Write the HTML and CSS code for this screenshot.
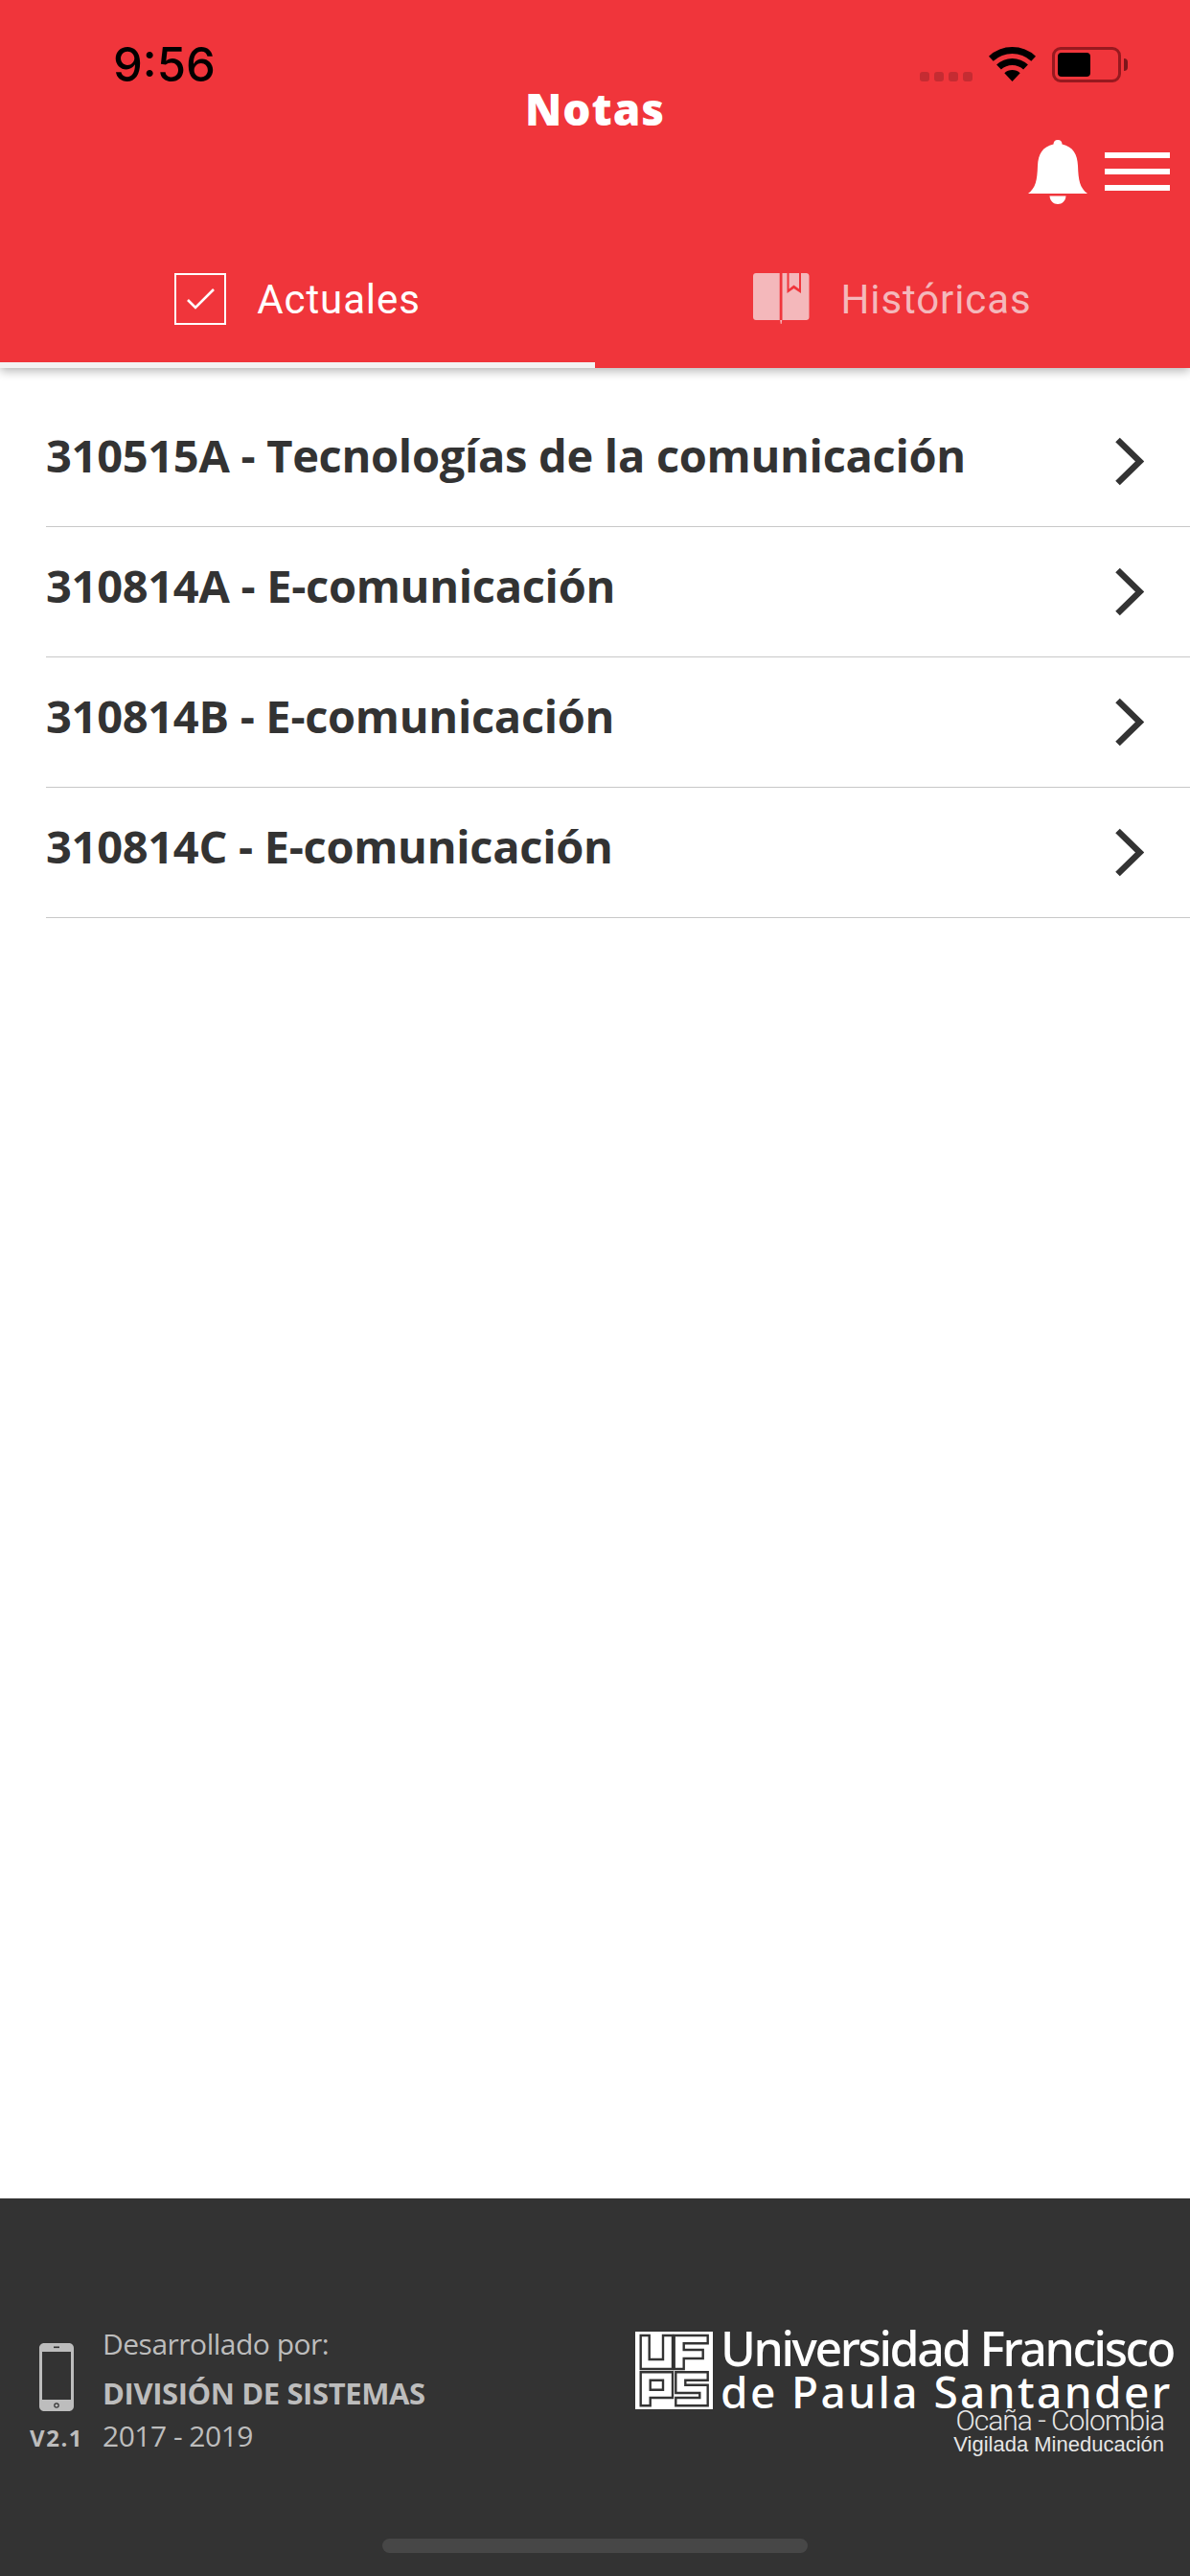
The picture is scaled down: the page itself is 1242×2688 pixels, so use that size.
FILE: index.html
```html
<!DOCTYPE html>
<html lang="es">
<head>
<meta charset="utf-8">
<title>Notas</title>
<link rel="stylesheet" href="styles.css">
</head>
<body>
<div class="app">
  <header class="header">
    <div class="status">
      <span class="time">9:56</span>
      <div class="status-icons">
        <span class="signal"><i></i><i></i><i></i><i></i></span>
        <svg class="wifi" width="49" height="36" viewBox="0 0 49 36"><path d="M0 9.700A36 36 0 0 1 49 9.700L44.300 14.800A29 29 0 0 0 4.700 14.800Z"/><path d="M8.100 18.500A24 24 0 0 1 40.900 18.500L36.100 23.600A17 17 0 0 0 12.900 23.600Z"/><path d="M16.300 27.200A12 12 0 0 1 32.700 27.200L24.500 36Z"/></svg>
        <span class="battery"><span class="battery-level"></span></span>
        <span class="battery-cap"></span>
      </div>
    </div>
    <h1 class="title">Notas</h1>
    <div class="actions">
      <svg class="bell" width="62" height="67" viewBox="0 0 62 67"><path d="M31 0C28 0 26.500 2 26.500 4.500C15 7 10.500 15 10 27C9.500 42 8 50 0 56H62C54 50 52.500 42 52 27C51.500 15 47 7 35.500 4.500C35.500 2 34 0 31 0Z" fill="#fff"/><path d="M22.500 58.500H39.500C39 64 35.500 67 31 67C26.500 67 23 64 22.500 58.500Z" fill="#fff"/></svg>
      <div class="burger"><i></i><i></i><i></i></div>
    </div>
    <nav class="tabs">
      <div class="tab tab-active">
        <span class="check"><svg width="29" height="22" viewBox="0 0 29 22"><path d="M1 12L9 20L28 1" fill="none" stroke="#fff" stroke-width="2.600"/></svg></span>
        <span class="tab-label">Actuales</span>
      </div>
      <div class="tab tab-muted">
        <svg class="book" width="59" height="53" viewBox="0 0 59 53"><path d="M3 0H27.700V49H3C1.300 49 0 47.700 0 46V3C0 1.300 1.300 0 3 0Z" fill="#f4b8bb"/><path d="M30.500 0H35.500V21L42.500 16L50 21V0H55.500C57.200 0 58.500 1.300 58.500 3V46C58.500 47.700 57.200 49 55.500 49H30.500Z" fill="#f4b8bb"/><path d="M37.500 0H48V16.500L42.500 12.500L37.500 16.500Z" fill="#f4b8bb"/><path d="M28.200 49H30.200L29.600 53H28.800Z" fill="#f4b8bb"/></svg>
        <span class="tab-label">Históricas</span>
      </div>
    </nav>
  </header>
  <main class="list">
    <div class="row"><span class="row-text">310515A - Tecnologías de la comunicación</span><svg class="chev" width="32" height="53" viewBox="0 0 32 53"><path d="M4.500 4L27.500 26.500L4.500 49" fill="none" stroke="#333" stroke-width="6.500"/></svg></div>
    <div class="row"><span class="row-text">310814A - E-comunicación</span><svg class="chev" width="32" height="53" viewBox="0 0 32 53"><path d="M4.500 4L27.500 26.500L4.500 49" fill="none" stroke="#333" stroke-width="6.500"/></svg></div>
    <div class="row"><span class="row-text">310814B - E-comunicación</span><svg class="chev" width="32" height="53" viewBox="0 0 32 53"><path d="M4.500 4L27.500 26.500L4.500 49" fill="none" stroke="#333" stroke-width="6.500"/></svg></div>
    <div class="row"><span class="row-text">310814C - E-comunicación</span><svg class="chev" width="32" height="53" viewBox="0 0 32 53"><path d="M4.500 4L27.500 26.500L4.500 49" fill="none" stroke="#333" stroke-width="6.500"/></svg></div>
  </main>
  <footer class="footer">
    <div class="footer-main">
      <div class="dev">
        <div class="version">
          <svg width="36" height="71" viewBox="0 0 36 71"><path fill-rule="evenodd" d="M5 0H31C33.800 0 36 2.200 36 5V66C36 68.800 33.800 71 31 71H5C2.200 71 0 68.800 0 66V5C0 2.200 2.200 0 5 0ZM3 9V59H33V9Z" fill="#bdbdbd"/><rect x="15" y="3.500" width="6" height="1.600" fill="#333"/><circle cx="18" cy="65" r="2.200" fill="none" stroke="#333" stroke-width="1.200"/></svg>
          <span class="version-label">V2.1</span>
        </div>
        <div class="dev-text">
          <span class="dev-line">Desarrollado por:</span>
          <span class="dev-strong">DIVISIÓN DE SISTEMAS</span>
          <span class="dev-line">2017 - 2019</span>
        </div>
      </div>
      <div class="brand">
        <div class="brand-top">
          <svg class="ufps" width="81" height="81" viewBox="0 0 81 81"><rect width="81" height="81" fill="#fff"/><g fill="none" stroke="#333" stroke-width="2.400"><path d="M5.700 4H14.700V29H29V4H39V39H5.700Z"/><path d="M40.700 4H75.700V12.300H50.700V19H70.700V28H50.700V39H40.700Z"/><path d="M5.700 42.300H39V69H15.700V77.300H5.700ZM15.700 50.700V60.700H29V50.700Z"/><path d="M42.300 42.300H75.700V50.700H52.300V55.700H75.700V77.300H42.300V69H67.300V64H42.300Z"/></g></svg>
          <div class="brand-name">
            <span class="brand-l1">Universidad Francisco</span>
            <span class="brand-l2">de Paula Santander</span>
          </div>
        </div>
        <div class="brand-sub">
          <span class="brand-city">Ocaña - Colombia</span>
          <span class="brand-vig">Vigilada Mineducación</span>
        </div>
      </div>
    </div>
    <div class="home-indicator"></div>
  </footer>
</div>
</body>
</html>
```

FILE: styles.css
```css
* { box-sizing: border-box; }
html, body { margin: 0; padding: 0; }
body { background: #fff; font-family: "Open Sans", "Liberation Sans", sans-serif; }
i { display: block; }

.app { width: 1242px; height: 2688px; display: flex; flex-direction: column; overflow: hidden; }

.header { height: 384px; background: #f0353b; position: relative; z-index: 1; box-shadow: 0 3px 10px rgba(0,0,0,.3); display: flex; flex-direction: column; flex: none; }

.status { height: 90px; display: flex; justify-content: space-between; padding: 45px 65px 0 118px; flex: none; }
.time { font: 500 49px/46px "Inter", "Liberation Sans", sans-serif; color: #000; height: 46px; }
.status-icons { display: flex; align-items: flex-start; margin-top: 4px; }
.signal { display: flex; gap: 5px; margin-top: 26px; margin-right: 17px; }
.signal i { width: 10px; height: 10px; border-radius: 3px; background: #c52c32; }
.wifi { margin-right: 17px; flex: none; }
.battery { width: 72px; height: 37px; border: 3px solid #97191f; border-radius: 9px; padding: 3px; display: block; }
.battery-level { display: block; width: 34px; height: 25px; background: #000; border-radius: 4px; }
.battery-cap { width: 4px; height: 13px; background: #7d161b; border-radius: 0 6px 6px 0; margin: 12px 0 0 3px; }

.title { margin: 0; position: absolute; left: 0; right: 0; top: 83px; text-align: center; color: #fff; font: 800 46px/60px "Open Sans", sans-serif; letter-spacing: 0.900px; }

.actions { display: flex; align-items: flex-start; justify-content: flex-end; padding-right: 21px; margin-top: 56px; gap: 18px; height: 67px; flex: none; }
.burger { width: 68px; display: flex; flex-direction: column; gap: 11px; padding-top: 13px; }
.burger i { height: 6px; background: #fff; }

.tabs { display: grid; grid-template-columns: 1fr 1fr; flex: 1; min-height: 0; margin-top: 72px; }
.tab { display: flex; align-items: flex-start; justify-content: center; gap: 32px; }
.tab-active { border-bottom: 6px solid #f3f3f3; color: #fff; }
.tab-muted { color: #f4b8bb; }
.check { width: 54px; height: 54px; border: 2.500px solid #fff; display: flex; align-items: center; justify-content: center; }
.tab-label { font: 400 42px/54px "Roboto", "Liberation Sans", sans-serif; letter-spacing: 0.900px; margin-top: 1px; }

.list { flex: 1; padding-left: 48px; padding-top: 30px; display: flex; flex-direction: column; }
.row { height: 136px; border-bottom: 1px solid #c8c8c8; display: flex; align-items: center; justify-content: space-between; padding-right: 48px; }
.row-text { font: 700 47px/60px "Open Sans", sans-serif; color: #333; letter-spacing: -0.300px; margin-bottom: 13px; white-space: nowrap; }
.chev { flex: none; }

.footer { height: 394px; background: #333; flex: none; display: flex; flex-direction: column; }
.footer-main { height: 355px; display: flex; justify-content: space-between; padding: 128px 18px 0 32px; flex: none; }
.dev { display: flex; gap: 21px; align-items: flex-start; }
.version { width: 54px; display: flex; flex-direction: column; align-items: center; padding-top: 23px; gap: 14px; }
.version-label { font: 700 24px/28px "Open Sans", sans-serif; color: #bdbdbd; letter-spacing: 1.500px; white-space: nowrap; }
.dev-text { display: flex; flex-direction: column; color: #bdbdbd; margin-top: 2px; }
.dev-line { font: 400 30px/44px "Open Sans", sans-serif; letter-spacing: -0.500px; }
.dev-strong { font: 700 31px/44px "Open Sans", sans-serif; letter-spacing: -0.400px; margin: 7px 0 1px; }

.brand { width: 561px; display: flex; flex-direction: column; margin-top: 11px; }
.brand-top { display: flex; gap: 8px; }
.ufps { flex: none; }
.brand-name { display: flex; flex-direction: column; color: #fff; margin-top: -8px; }
.brand-l1 { font: 500 50px/50px "Noto Sans", sans-serif; letter-spacing: -2.400px; white-space: nowrap; }
.brand-l2 { font: 500 46px/41px "Noto Sans", sans-serif; letter-spacing: 2.400px; white-space: nowrap; }
.brand-sub { display: flex; flex-direction: column; align-items: flex-end; margin-top: -5px; padding-right: 9px; color: #e6e6e6; }
.brand-city { font: 300 30px/30px "Roboto", sans-serif; letter-spacing: -1px; }
.brand-vig { font: 400 22px/18px "Liberation Sans", sans-serif; margin-top: 1px; }

.home-indicator { width: 444px; height: 15px; background: #474747; border-radius: 8px; margin: 0 auto; flex: none; }
```
